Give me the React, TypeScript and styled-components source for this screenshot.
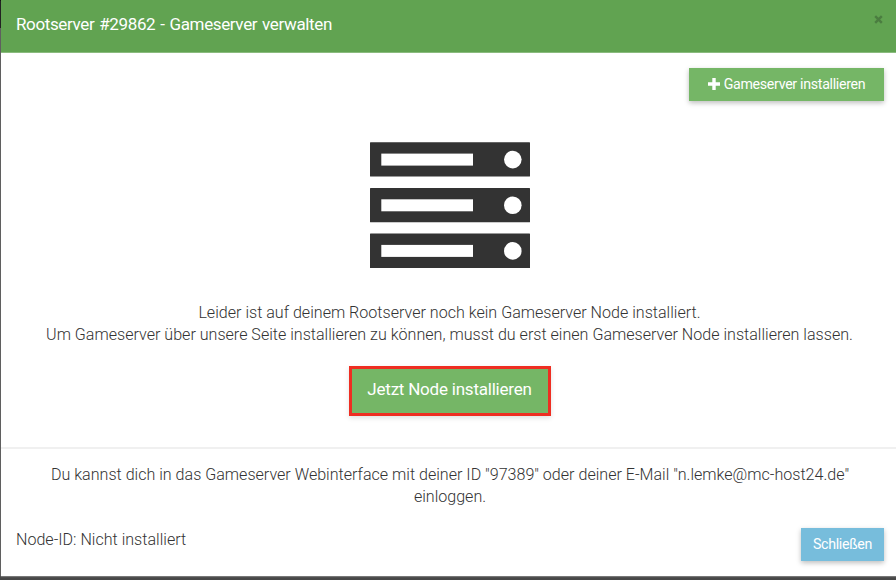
import React from 'react';
import styled, { createGlobalStyle } from 'styled-components';

const GlobalStyle = createGlobalStyle`
  * { box-sizing: border-box; }
  body {
    margin: 0;
    overflow: hidden;
    background: #4b4b4b;
    color: #333;
    font-family: Roboto, 'Liberation Sans', sans-serif;
    font-size: 16.08px;
    font-weight: 300;
    line-height: 22px;
  }
`;

const Backdrop = styled.div`
  height: 580px;
  padding-left: 1px;
  background: linear-gradient(#111 0 28px, #5b5b5b 28px 576px, #484848 576px);
`;

const Dialog = styled.section`
  display: flex;
  flex-direction: column;
  height: 576px;
  background: #fff;
  box-shadow: 0 1px 1px #777;
`;

const Header = styled.header`
  display: flex;
  justify-content: space-between;
  height: 53px;
  flex: none;
  padding: 13px 13px 0 15px;
  background: #61a351;
  border-bottom: 1px solid #8abb7e;
`;

const Title = styled.h1`
  margin: 0;
  color: #fff;
  font-size: 17px;
  font-weight: 400;
  line-height: 23px;
  letter-spacing: -0.37px;
  word-spacing: 1.1px;
  white-space: nowrap;
`;

const CloseButton = styled.button`
  width: 9px;
  height: 9px;
  margin-top: 2px;
  padding: 0;
  border: 0;
  background: none;
  svg { display: block; }
`;

const Body = styled.main`
  display: flex;
  flex-direction: column;
  align-items: center;
  height: 394px;
  flex: none;
  padding: 15px 12px 0 14px;
`;

const Button = styled.button<{ $color: string; $width: number }>`
  display: flex;
  align-items: center;
  justify-content: center;
  gap: 4px;
  width: ${(p) => p.$width}px;
  height: 33px;
  flex: none;
  padding: 0 0 2px;
  border: 0;
  background: ${(p) => p.$color};
  box-shadow: 0 2px 5px rgba(0, 0, 0, 0.26);
  color: #fff;
  font: 400 14.2px/20px Roboto, sans-serif;
  letter-spacing: -0.3px;
  white-space: nowrap;
`;

const AddButton = styled(Button)`
  align-self: flex-end;
`;

const NodeButton = styled(Button)`
  height: 50px;
  margin-top: 20px;
  padding-bottom: 5px;
  border: 3px solid #ee2e22;
  box-shadow: 0 2px 5px rgba(0, 0, 0, 0.12);
  font-size: 17px;
  letter-spacing: -0.22px;
`;

const ServerIcon = styled.svg`
  display: block;
  flex: none;
  margin-top: 41px;
`;

const Message = styled.p`
  margin: 34px 0 0;
  text-align: center;
  white-space: nowrap;
`;

const MessageLine = styled.span`
  display: block;
`;

const Footer = styled.footer`
  flex: 1;
  padding: 15px 12px 0 15px;
  border-top: 2px solid #f0f0f0;
`;

const LoginHint = styled.p`
  margin: 0;
  text-align: center;
  white-space: nowrap;
`;

const FooterRow = styled.div`
  display: flex;
  justify-content: space-between;
  align-items: flex-start;
  margin-top: 20px;
`;

const NodeId = styled.span`
  padding-top: 1px;
`;

const rows = [0.3, 46, 91.6];

export default function App() {
  return (
    <>
      <GlobalStyle />
      <Backdrop>
        <Dialog role="dialog" aria-label="Gameserver verwalten">
          <Header>
            <Title>Rootserver #29862 - Gameserver verwalten</Title>
            <CloseButton aria-label="Close">
              <svg width="9" height="9" viewBox="0 0 9 9">
                <path d="M1.2 1.2 7.8 7.8M7.8 1.2 1.2 7.8" stroke="#4b7d40" strokeWidth="2.4" />
              </svg>
            </CloseButton>
          </Header>
          <Body>
            <AddButton $color="#75b666" $width={195}>
              <svg width="12" height="12" viewBox="0 0 12 12">
                <path d="M6 0v12M0 6h12" stroke="#fff" strokeWidth="3.4" />
              </svg>
              <span>Gameserver installieren</span>
            </AddButton>
            <ServerIcon width="160" height="126" viewBox="0 0 160 126">
              {rows.map((y) => (
                <g key={y} transform={`translate(0 ${y})`}>
                  <rect width="160" height="34.3" rx="0.5" fill="#333" />
                  <rect x="11.3" y="11.3" width="91.7" height="12" fill="#fff" />
                  <circle cx="142.8" cy="17.3" r="8.8" fill="#fff" />
                </g>
              ))}
            </ServerIcon>
            <Message>
              <MessageLine>Leider ist auf deinem Rootserver noch kein Gameserver Node installiert.</MessageLine>
              <MessageLine>Um Gameserver über unsere Seite installieren zu können, musst du erst einen Gameserver Node installieren lassen.</MessageLine>
            </Message>
            <NodeButton $color="#75b666" $width={202}>
              <span>Jetzt Node installieren</span>
            </NodeButton>
          </Body>
          <Footer>
            <LoginHint>
              <MessageLine>Du kannst dich in das Gameserver Webinterface mit deiner ID "97389" oder deiner E-Mail "n.lemke@mc-host24.de"</MessageLine>
              <MessageLine>einloggen.</MessageLine>
            </LoginHint>
            <FooterRow>
              <NodeId>Node-ID: Nicht installiert</NodeId>
              <Button $color="#77bddc" $width={83}>
                Schließen
              </Button>
            </FooterRow>
          </Footer>
        </Dialog>
      </Backdrop>
    </>
  );
}
